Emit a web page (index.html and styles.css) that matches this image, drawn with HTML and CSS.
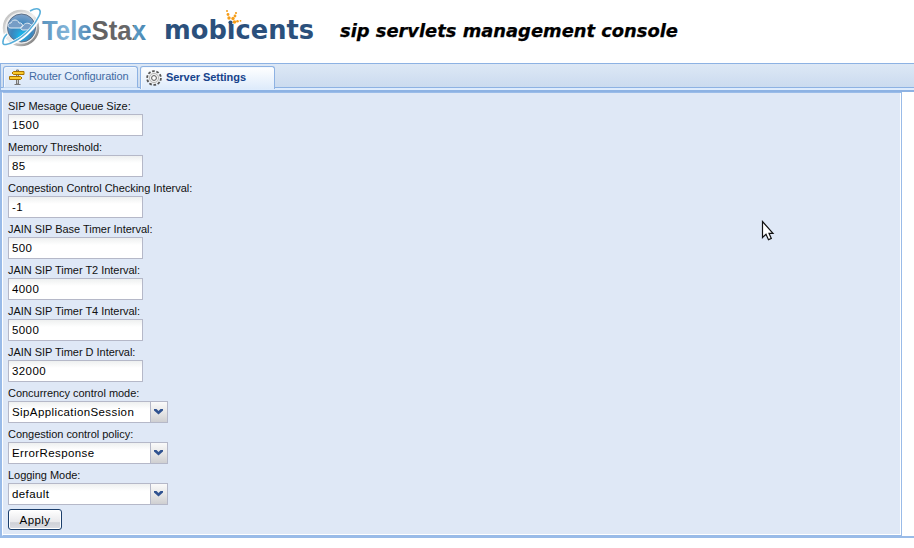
FILE: index.html
```
<!DOCTYPE html>
<html lang="en">
<head>
<meta charset="utf-8">
<title>sip servlets management console</title>
<link rel="stylesheet" href="styles.css">
</head>
<body>
<header class="header">
  <svg class="brand" width="720" height="63" viewBox="0 0 720 63">
    <defs>
      <radialGradient id="globe" cx=".5" cy=".75" r=".8"><stop offset="0" stop-color="#20b4e8"/><stop offset=".45" stop-color="#3b86bd"/><stop offset="1" stop-color="#8aa6cc"/></radialGradient>
      <linearGradient id="rim" x1="0" y1="0" x2="1" y2="1"><stop offset="0" stop-color="#b8b8b8"/><stop offset=".5" stop-color="#eee"/><stop offset="1" stop-color="#666"/></linearGradient>
      <linearGradient id="word" gradientUnits="userSpaceOnUse" x1="42" y1="0" x2="147" y2="0"><stop offset="0" stop-color="#5a94bf"/><stop offset=".25" stop-color="#82b4d8"/><stop offset=".485" stop-color="#4b83b2"/><stop offset=".486" stop-color="#616163"/><stop offset=".87" stop-color="#68686a"/><stop offset=".88" stop-color="#5d9cc6"/><stop offset="1" stop-color="#4784af"/></linearGradient>
    </defs>
    <circle cx="21" cy="28" r="17" fill="#eee" stroke="url(#rim)" stroke-width="2.5"/>
    <circle cx="21.5" cy="28" r="14" fill="url(#globe)" stroke="#5e7087" stroke-width="1"/>
    <path d="M11 28c-4 0-4-5 0-5 1-4 7-4 8 0 4-1 5 5 1 5zM23 30c-3 0-3-4 0-4 1-3 6-4 8-1 4 0 4 5 0 5z" fill="#769dc6" stroke="#e3edf5" stroke-width="1"/>
    <path d="M15 39q11-2 19-14-6 6-14 7z" fill="#16b4e9" opacity=".7"/>
    <path d="M29 11c8-5 13-2 10 5-2 8-13 20-23 25C9 45 2 47 2 43c0-3 2-6 5-9" fill="none" stroke="#fff" stroke-width="4"/>
    <path d="M30 11c9-5 12-1 9 5-4 9-14 20-24 25C8 45 2 46 3 42q0-4 4-8" fill="none" stroke="#57aeda" stroke-width="1.6"/>
    <text class="telestax" x="42" y="39.5" textLength="104" lengthAdjust="spacingAndGlyphs">TeleStax</text>
    <text class="mobicents" x="164" y="38.5" textLength="150" lengthAdjust="spacingAndGlyphs">mob&#305;cents</text>
    <circle cx="230.5" cy="22.5" r="2.1" fill="#2b507c"/>
    <g fill="#f59e1b"><circle cx="227" cy="11" r="1"/><circle cx="228" cy="14.5" r="1.4"/><circle cx="229" cy="18" r="1.7"/><circle cx="236" cy="13" r="1.1"/><circle cx="235" cy="16" r="1.4"/><circle cx="233" cy="18.5" r="1.7"/><circle cx="234.500" cy="22" r="1.8"/><circle cx="237.5" cy="21.3" r="1.3"/><circle cx="240.5" cy="20.8" r=".9"/></g>
    <text class="title" x="340" y="36.5" textLength="338" lengthAdjust="spacingAndGlyphs">sip servlets management console</text>
  </svg>
</header>
<nav class="tabs">
  <a class="tab router">
    <svg width="16" height="16" viewBox="0 0 16 16"><path d="M7.500 1v14h2V1zM5.500 15.500h6" fill="#ccc" stroke="#777" stroke-width="1"/><path d="M4.500 2.500h10.500v3h-10.500l-1.500-1.500zM.5 7.500h11l1.500 1.500-1.500 1.500h-11z" fill="#f9c92b" stroke="#a97200"/></svg>
    <span>Router Configuration</span>
  </a>
  <a class="tab active">
    <svg width="16" height="16" viewBox="0 0 16 16"><circle cx="8" cy="8" r="6.700" fill="none" stroke="#555" stroke-width="2.200" stroke-dasharray="2.600 1.610"/><circle cx="8" cy="8" r="6" fill="#f0f0f0"/><circle cx="8" cy="8" r="4.600" fill="none" stroke="#aaa" stroke-width=".8"/><circle cx="8" cy="8" r="2.400" fill="#fff" stroke="#555"/></svg>
    <span>Server Settings</span>
  </a>
</nav>
<main class="body">
  <form class="panel">
    <label>SIP Mesage Queue Size:</label><div class="field">1500</div>
    <label>Memory Threshold:</label><div class="field">85</div>
    <label>Congestion Control Checking Interval:</label><div class="field">-1</div>
    <label>JAIN SIP Base Timer Interval:</label><div class="field">500</div>
    <label>JAIN SIP Timer T2 Interval:</label><div class="field">4000</div>
    <label>JAIN SIP Timer T4 Interval:</label><div class="field">5000</div>
    <label>JAIN SIP Timer D Interval:</label><div class="field">32000</div>
    <label>Concurrency control mode:</label><div class="field combo"><span>SipApplicationSession</span><i><svg width="9" height="6" viewBox="0 0 9 6"><path d="M0 0h2.500l2 2 2-2H9v1.500L4.500 5.500 0 1.500z"/></svg></i></div>
    <label>Congestion control policy:</label><div class="field combo"><span>ErrorResponse</span><i><svg width="9" height="6" viewBox="0 0 9 6"><path d="M0 0h2.500l2 2 2-2H9v1.500L4.500 5.500 0 1.500z"/></svg></i></div>
    <label>Logging Mode:</label><div class="field combo"><span>default</span><i><svg width="9" height="6" viewBox="0 0 9 6"><path d="M0 0h2.500l2 2 2-2H9v1.500L4.500 5.500 0 1.500z"/></svg></i></div>
    <button type="button" class="apply">Apply</button>
  </form>
</main>
<svg class="pointer" width="16" height="22" viewBox="0 0 16 22"><path d="M1.500 1.500v16l3.500-3.300 2.500 5.500 2.800-1.300-2.300-5.100h4z" fill="#fff" stroke="#111" stroke-width="1.200"/></svg>
</body>
</html>
```
FILE: styles.css
```
* { box-sizing: border-box; }
body { margin: 0; height: 548px; overflow: hidden; background: #fff; font-family: "Liberation Sans", Arial, sans-serif; font-size: 11px; color: #111; }
.header { height: 63px; }
.brand { display: block; }
.telestax { font: bold 28px "Liberation Sans", sans-serif; fill: url(#word); }
.mobicents { font: bold 26px "DejaVu Sans", sans-serif; fill: #2b507c; }
.title { font: italic bold 18px "DejaVu Sans", sans-serif; fill: #000; stroke: #000; stroke-width: .25px; }
.tabs { display: flex; gap: 2px; height: 29px; padding: 2px 0 0 2px; border-top: 1px solid #8db2e3; border-bottom: 2px solid #8db2e3; border-left: 1px solid #8db2e3; background: linear-gradient(#dde8f5 0, #cbdbef 23px, #8db2e3 23px, #8db2e3 24px, #deecfd 24px); }
.tab { display: flex; align-items: center; height: 22px; width: 135px; padding: 0 0 0 5px; gap: 4px; border: 1px solid #8db2e3; border-bottom-color: #c4d7ee; border-radius: 3px 3px 0 0; background: linear-gradient(#e8f1fc, #dce8f8); box-shadow: inset 1px 1px #f4f8fd; color: #416aa3; white-space: nowrap; letter-spacing: -.1px; }
.tab svg { flex: none; }
.tab span { height: 13px; line-height: 13px; margin-bottom: 2px; }
.tab.active { height: 23px; background: linear-gradient(#fff, #deebfb); border-bottom: 0; color: #15428b; font-weight: bold; letter-spacing: -.05px; }
.body { height: 446px; border-left: 2px solid #99bbe8; border-bottom: 2px solid #99bbe8; }
.panel { display: flex; flex-direction: column; align-items: flex-start; width: 900px; height: 444px; padding: 6px 0 0 5px; background: #dfe8f6; border: 1px solid #99bbe8; border-left-color: #fff; box-shadow: inset -1px -1px #fff; }
label { height: 15px; line-height: 15px; white-space: nowrap; letter-spacing: -.03px; }
.field { width: 135px; height: 22px; margin-bottom: 4px; padding-left: 3px; line-height: 20px; font-size: 11.500px; letter-spacing: .4px; border: 1px solid #b5b8c8; background: linear-gradient(#eef0f0, #fff 7px); white-space: nowrap; color: #000; }
.combo { display: flex; width: 160px; }
.combo span { flex: 1; }
.combo i { display: flex; justify-content: center; align-items: center; width: 17px; padding-right: 1px; border-left: 1px solid #b5b8c8; background: linear-gradient(#fafafa, #e7e7e7 50%, #cfcfd1); }
.combo path { fill: #2f5290; }
.apply { width: 54px; height: 21px; padding: 0; border: 1px solid #1c3f6c; border-radius: 3px; background: linear-gradient(#fff, #e8e8eb 65%, #cfd1d7 66%, #dcdde3); box-shadow: inset 0 0 0 1px #fff; font: 11.500px "Liberation Sans", sans-serif; letter-spacing: .4px; color: #000; }
.pointer { position: absolute; left: 761px; top: 220px; }
```
